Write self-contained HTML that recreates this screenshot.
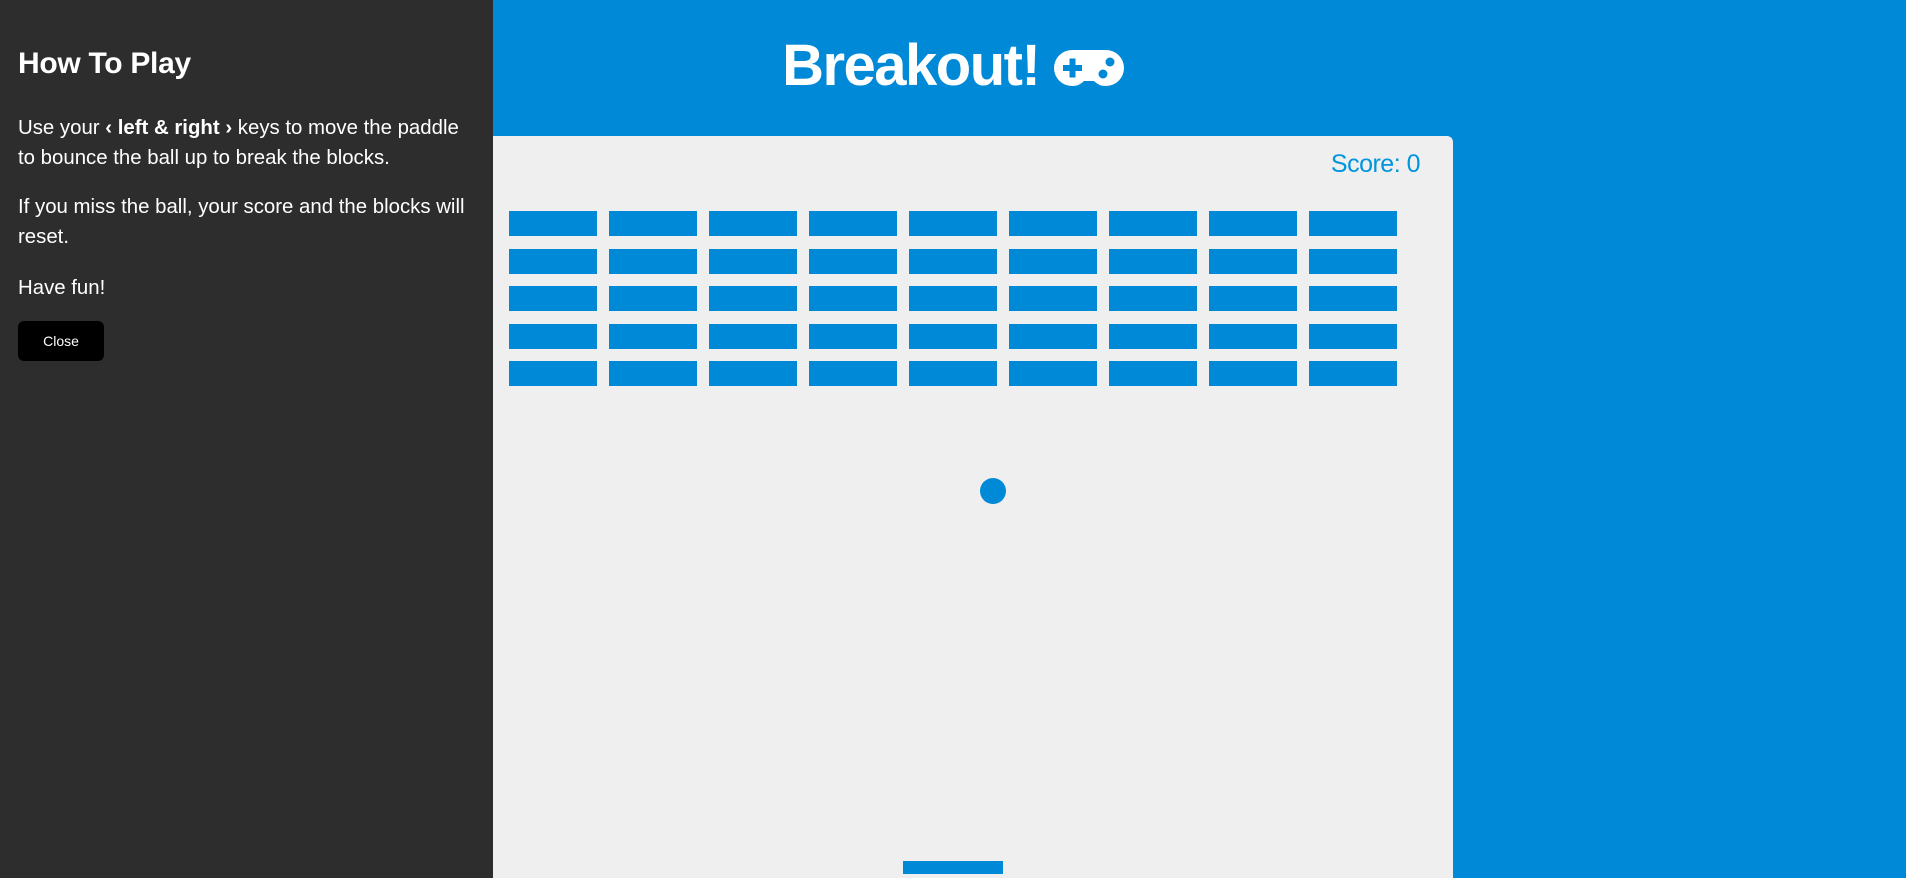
<!DOCTYPE html>
<html><head><meta charset="utf-8"><style>
html,body{margin:0;padding:0;width:1906px;height:878px;overflow:hidden;background:#0089d6;font-family:"Liberation Sans",Arial,sans-serif;}
.side{position:absolute;left:0;top:0;width:493px;height:878px;background:#2d2d2d;color:#fff;}
.side h1{position:absolute;left:18px;top:47px;margin:0;font-size:30px;font-weight:bold;letter-spacing:-0.3px;}
.side p{position:absolute;left:18px;margin:0;font-size:20.4px;line-height:30px;width:460px;}
.btn{position:absolute;left:18px;top:321px;width:86px;height:40px;background:#000;border-radius:6px;color:#fff;font-size:14px;text-align:center;line-height:40px;}
.title{position:absolute;left:0;width:1906px;top:33px;text-align:center;color:#fff;font-size:58px;font-weight:bold;line-height:66px;letter-spacing:-1.5px;}
.canvas{position:absolute;left:493px;top:136px;width:960px;height:742px;background:#efefef;border-top-right-radius:6px;}
.score{position:absolute;right:33px;top:14px;color:#0095dd;font-size:25px;letter-spacing:-0.5px;}
.b{position:absolute;width:88px;height:25px;background:#0089d6;}
</style></head><body>
<div class="title">Breakout! <svg width="70" height="37" viewBox="0 0 70 37" style="vertical-align:-2px"><path d="M18 0H52A18 18 0 0 1 70 18A18 18 0 0 1 52 36A16 16 0 0 1 40 31H30A16 16 0 0 1 18 36A18 18 0 0 1 0 18A18 18 0 0 1 18 0Z" fill="#fff"/><rect x="9" y="15" width="19" height="6" fill="#0089d6"/><rect x="15.5" y="8.5" width="6" height="19" fill="#0089d6"/><circle cx="56" cy="12" r="4.5" fill="#0089d6"/><circle cx="49" cy="24" r="4.5" fill="#0089d6"/></svg></div>
<div class="canvas">
<div class="score">Score: 0</div>
<div id="bricks"></div>
<div style="position:absolute;left:487px;top:342px;width:26px;height:26px;border-radius:50%;background:#0089d6"></div>
<div style="position:absolute;left:410px;top:725px;width:100px;height:13px;background:#0089d6"></div>
</div>
<div class="side">
<h1>How To Play</h1>
<p style="top:113px">Use your <b>‹ left &amp; right ›</b> keys to move the paddle to bounce the ball up to break the blocks.</p>
<p style="top:192px">If you miss the ball, your score and the blocks will reset.</p>
<p style="top:273px">Have fun!</p>
<div class="btn">Close</div>
</div>
<script>
var h='';for(var r=0;r<5;r++)for(var c=0;c<9;c++)h+='<div class="b" style="left:'+(16+c*100)+'px;top:'+(75+r*37.5)+'px"></div>';
document.getElementById('bricks').innerHTML=h;
</script>
</body></html>
